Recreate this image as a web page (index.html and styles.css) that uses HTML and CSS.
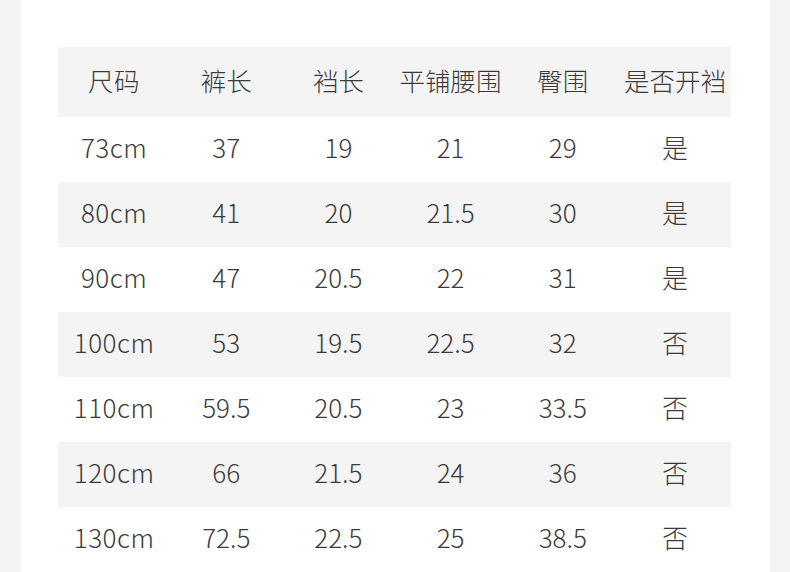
FILE: index.html
```html
<!DOCTYPE html>
<html lang="zh">
<head>
<meta charset="utf-8">
<link rel="stylesheet" href="styles.css">
</head>
<body>
<div class="panel">
  <div class="table">
    <div class="row head"><span>尺码</span><span>裤长</span><span>裆长</span><span>平铺腰围</span><span>臀围</span><span>是否开裆</span></div>
    <div class="row"><span>73cm</span><span>37</span><span>19</span><span>21</span><span>29</span><span>是</span></div>
    <div class="row alt"><span>80cm</span><span>41</span><span>20</span><span>21.5</span><span>30</span><span>是</span></div>
    <div class="row"><span>90cm</span><span>47</span><span>20.5</span><span>22</span><span>31</span><span>是</span></div>
    <div class="row alt"><span>100cm</span><span>53</span><span>19.5</span><span>22.5</span><span>32</span><span>否</span></div>
    <div class="row"><span>110cm</span><span>59.5</span><span>20.5</span><span>23</span><span>33.5</span><span>否</span></div>
    <div class="row alt"><span>120cm</span><span>66</span><span>21.5</span><span>24</span><span>36</span><span>否</span></div>
    <div class="row"><span>130cm</span><span>72.5</span><span>22.5</span><span>25</span><span>38.5</span><span>否</span></div>
  </div>
</div>
</body>
</html>
```
FILE: styles.css
```css
html, body {
  margin: 0;
  padding: 0;
  background: #f4f4f4;
  height: 572px;
  overflow: hidden;
}
.panel {
  margin: 0 20px 0 21px;
  background: #ffffff;
  height: 572px;
  padding: 47px 39px 0 37px;
  box-sizing: border-box;
}
.table {
  width: 673px;
  font-family: "Noto Sans CJK SC", "Noto Sans", sans-serif;
  font-weight: 300;
  color: #3a3a3a;
  font-size: 26px;
}
.row {
  display: grid;
  grid-template-columns: repeat(6, 1fr);
  height: 65px;
  box-sizing: border-box;
  padding-bottom: 6px;
  align-items: center;
  text-align: center;
}
.row.head {
  height: 70px;
  padding-bottom: 5px;
  background: #f4f4f4;
}
.row.alt {
  background: #f4f4f4;
}
.row span {
  display: block;
  line-height: 1;
  white-space: nowrap;
}
.row span:first-child {
  letter-spacing: 0.5px;
}
.head span {
  font-size: 25.5px;
}
```
